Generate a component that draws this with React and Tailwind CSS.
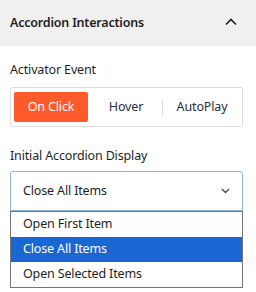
export default function App() {
  const modes = ["On Click", "Hover", "AutoPlay"];
  const options = ["Open First Item", "Close All Items", "Open Selected Items"];

  return (
    <div
      className="w-[256px] h-[292px] bg-white text-[#1e1e1e] overflow-hidden"
      style={{ fontFamily: '"Noto Sans", "Open Sans", sans-serif' }}
    >
      {/* panel header */}
      <div className="h-[46px] bg-[#f0f0f0] px-[10px] flex items-center justify-between">
        <span className="text-[12.5px] font-semibold tracking-[-0.2px]">Accordion Interactions</span>
        <svg width="12" height="8" viewBox="0 0 12 8" className="mr-[9px] mb-[3px]">
          <path d="M1 6.5 L6 1.5 L11 6.5" fill="none" stroke="#1e1e1e" strokeWidth="1.6" />
        </svg>
      </div>

      <div className="px-[10px] text-[12.5px] tracking-[-0.15px]">
        <div className="mt-[14px] leading-[20px]">Activator Event</div>

        {/* activator buttons */}
        <div className="mt-[7px] h-[40px] w-[233px] border border-[#dddddd] rounded-[2px] flex items-center px-[3px]">
          {modes.map((m, i) => (
            <div key={m} className="flex items-center">
              {i === 2 && <div className="w-px h-[17px] bg-[#dddddd]" />}
              <div
                className={
                  i === 0
                    ? "w-[74px] h-[30px] bg-[#ff5a2c] text-white rounded-[2px] flex items-center justify-center"
                    : i === 1
                    ? "w-[74px] h-[30px] flex items-center justify-center pl-[2px] text-[#2c2c3c]"
                    : "w-[78px] h-[30px] flex items-center justify-center text-[#2c2c3c]"
                }
              >
                {m}
              </div>
            </div>
          ))}
        </div>

        <div className="mt-[19px] leading-[20px]">Initial Accordion Display</div>

        {/* select */}
        <div className="mt-[5px] w-[233px] h-[40px] border border-[#8fb4d4] rounded-t-[3px] flex items-center justify-between pl-[12px] pr-[12px]">
          <span>Close All Items</span>
          <svg width="9" height="6" viewBox="0 0 9 6">
            <path d="M1 1 L4.5 4.5 L8 1" fill="none" stroke="#444" strokeWidth="1.3" />
          </svg>
        </div>

        {/* open option list */}
        <div className="w-[233px] border border-[#767676] flex flex-col">
          {options.map((o) => (
            <div
              key={o}
              className={
                o === "Close All Items"
                  ? "h-[25px] px-[12px] flex items-center bg-[#1a66d2] text-white"
                  : "h-[25px] px-[12px] flex items-center"
              }
            >
              {o}
            </div>
          ))}
        </div>
      </div>
    </div>
  );
}
